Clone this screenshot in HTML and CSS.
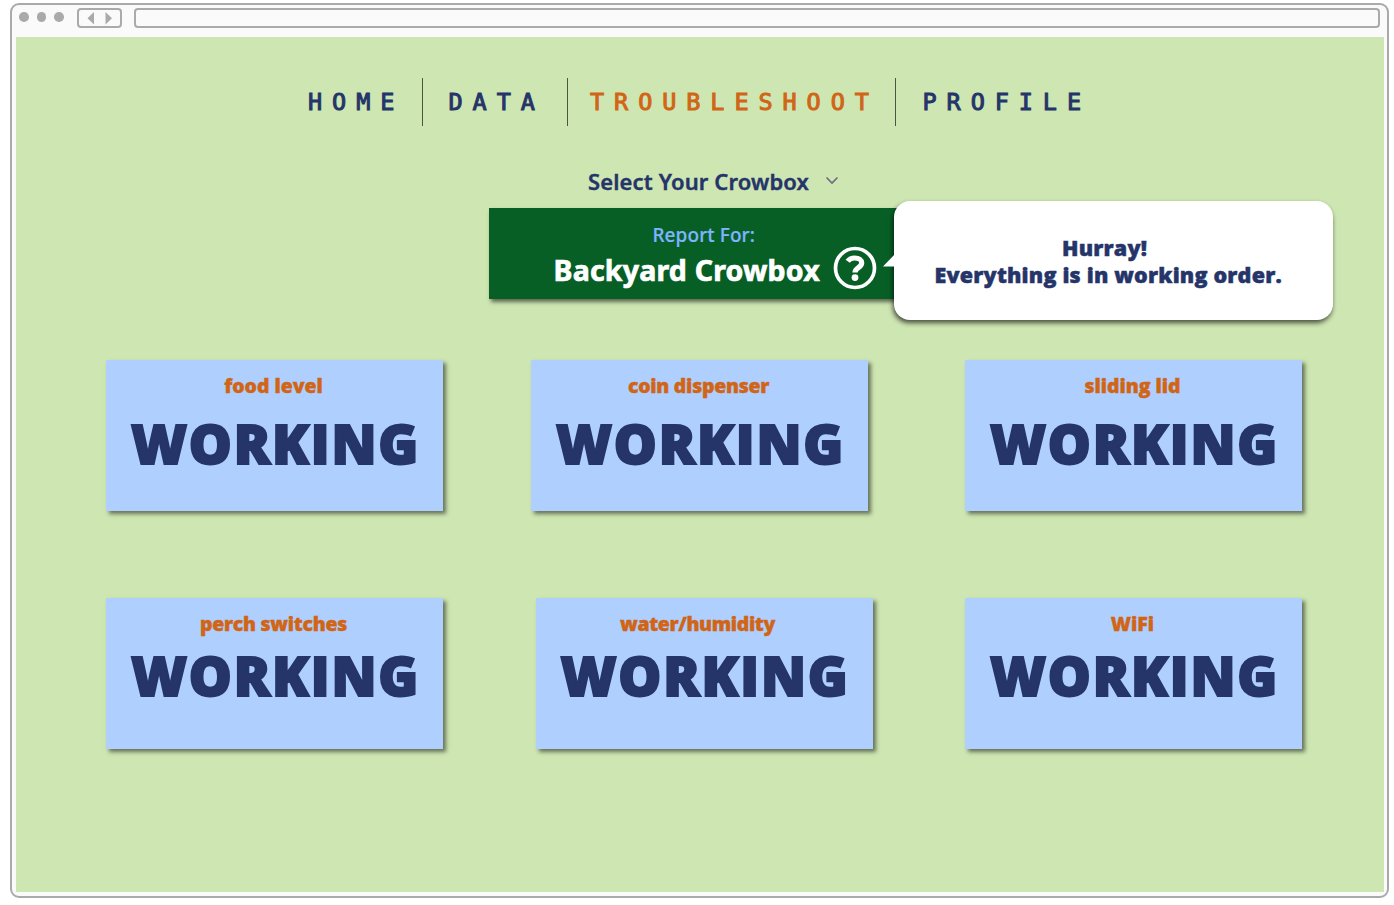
FILE: index.html
```html
<!DOCTYPE html>
<html lang="en">
<head>
<meta charset="utf-8">
<title>Crowbox Troubleshoot</title>
<link rel="stylesheet" href="styles.css">
</head>
<body>
<div class="window">
  <div class="chrome">
    <div class="dots"><i></i><i></i><i></i></div>
    <div class="history">
      <svg width="42" height="16" viewBox="0 0 42 16"><path d="M15 2v12.500L8.500 8.200zM26.500 2v12.500L33 8.200z" fill="#aaa"/></svg>
    </div>
    <div class="address"></div>
  </div>
  <main class="page">
    <nav class="nav">
      <a class="home">HOME</a>
      <a class="data">DATA</a>
      <a class="trouble">TROUBLESHOOT</a>
      <a class="profile">PROFILE</a>
    </nav>
    <div class="select">
      <span class="select-label">Select Your Crowbox</span>
      <svg width="14" height="10" viewBox="0 0 14 10"><path d="M1.500 1.500L7 7l5.500-5.500" fill="none" stroke="#6c6c7e" stroke-width="1.600"/></svg>
    </div>
    <section class="report">
      <div class="report-for">Report For:</div>
      <div class="report-name">Backyard Crowbox</div>
      <svg class="help" width="44" height="44" viewBox="0 0 44 44"><circle cx="22" cy="22" r="19.500" fill="none" stroke="#fff" stroke-width="3.700"/><path d="M14.700 15.200C16.300 13 18.800 12 21.700 12c4.200 0 7 2 7 5 0 4.600-6.700 4.700-6.700 9.500" fill="none" stroke="#fff" stroke-width="5.200"/><circle cx="22" cy="31.600" r="3.400" fill="#fff"/></svg>
      <div class="bubble">
        <svg class="tail" width="12" height="13" viewBox="0 0 12 13"><path d="M12 0v12.500H0z" fill="#fff"/></svg>
        <div class="hurray">Hurray!</div>
        <div class="every">Everything is in working order.</div>
      </div>
    </section>
    <section class="cards">
      <article class="card"><h2>food level</h2><p>WORKING</p></article>
      <article class="card"><h2 class="tight">coin dispenser</h2><p>WORKING</p></article>
      <article class="card"><h2>sliding lid</h2><p>WORKING</p></article>
    </section>
    <section class="cards second">
      <article class="card"><h2 class="tight">perch switches</h2><p>WORKING</p></article>
      <article class="card"><h2 class="tight water">water/humidity</h2><p>WORKING</p></article>
      <article class="card"><h2>WiFi</h2><p>WORKING</p></article>
    </section>
  </main>
</div>
</body>
</html>
```
FILE: styles.css
```css
* { box-sizing: border-box; }
body { margin: 0; height: 905px; padding: 3px 5px 7px 10px; background: #fff; overflow: hidden; font-family: "Noto Sans", "Open Sans", sans-serif; color: #253469; }
.window { height: 895px; border: 2px solid #aaa; border-radius: 9px; background: #fafafa; padding: 0 3px 4px 4px; }
.chrome { height: 32px; display: flex; align-items: flex-start; padding: 3px 4px 0 3px; }
.dots { display: flex; gap: 8px; padding-top: 4px; width: 58px; }
.dots i { width: 9.700px; height: 9.700px; border-radius: 50%; background: #aaa; }
.history { width: 45px; height: 19.500px; border: 2px solid #aaa; border-radius: 4px; margin-right: 12px; }
.history svg { display: block; }
.address { flex: 1; height: 19.500px; border: 2px solid #aaa; border-radius: 4px; }
.page { height: 855px; background: #cee6b2; padding-top: 41px; }
.nav { display: flex; height: 48px; margin-left: 292px; font: 23.500px/48px "DejaVu Sans Mono", monospace; letter-spacing: 9.920px; -webkit-text-stroke: 1px currentColor; white-space: nowrap; }
.nav a + a { border-left: 1.500px solid #4a5640; }
.home { width: 114px; }
.data { width: 145px; padding-left: 25.500px; }
.trouble { width: 328px; padding-left: 22px; color: #d16516; }
.profile { padding-left: 26.500px; }
.select { display: flex; height: 30px; margin: 40px 0 0 572px; font-size: 22px; line-height: 30px; font-weight: 600; -webkit-text-stroke: .4px currentColor; }
.select-label { width: 237px; letter-spacing: .13px; white-space: nowrap; }
.select svg { margin-top: 10px; }
.report { position: relative; width: 408px; height: 91px; margin: 12px 0 0 473px; background: #075f26; box-shadow: 2px 3px 4px rgba(0,0,0,.55); color: #fff; }
.report-for { padding: 14px 0 0 163.500px; height: 43px; font-size: 19px; line-height: 27px; font-weight: 500; color: #7fb5ff; white-space: nowrap; letter-spacing: .1px; -webkit-text-stroke: .2px currentColor; }
.report-name { padding-left: 64.500px; font-size: 28.500px; line-height: 38px; font-weight: 700; white-space: nowrap; -webkit-text-stroke: .7px currentColor; letter-spacing: .2px; }
.help { position: absolute; left: 343.500px; top: 38px; }
.bubble { position: absolute; left: 405px; top: -7px; width: 439px; height: 119px; border-radius: 16px; background: #fff; box-shadow: -1px 3px 5px rgba(0,0,0,.65); color: #253469; padding-top: 32.500px; font-family: "Open Sans", sans-serif; font-size: 21.500px; line-height: 27px; font-weight: 800; white-space: nowrap; -webkit-text-stroke: .5px currentColor; }
.tail { position: absolute; left: -11px; top: 53px; }
.hurray { padding-left: 168px; letter-spacing: .2px; }
.every { padding-left: 40.500px; letter-spacing: .2px; }
.cards { display: grid; grid-template-columns: 337px 337px 337px; margin: 61px 82px 0 90px; justify-content: space-between; height: 151px; }
.cards.second { margin-top: 87px; }
.card { background: #afcfff; box-shadow: 3px 3px 4px rgba(0,0,0,.5); text-align: center; padding: 12px 2px 0 0; }
.cards:not(.second) .card:nth-child(2) { margin: 0 4.500px 0 -4.500px; }
.second .card:nth-child(2) { margin: 0 0 0 0; }
.card h2 { margin: 0; font-family: "Open Sans", sans-serif; font-size: 19.500px; line-height: 28px; font-weight: 800; color: #d16516; letter-spacing: -.05px; -webkit-text-stroke: .4px currentColor; }
.card h2.tight { letter-spacing: -.3px; }
.card h2.water { letter-spacing: -.4px; padding-right: 11px; }
.card p { margin: 5px 0 0; padding-left: 4px; font-family: "Open Sans", sans-serif; font-size: 54px; line-height: 76px; font-weight: 800; white-space: nowrap; letter-spacing: 1.800px; -webkit-text-stroke: 2px currentColor; }
.second .card p { margin-top: -1px; }
```
